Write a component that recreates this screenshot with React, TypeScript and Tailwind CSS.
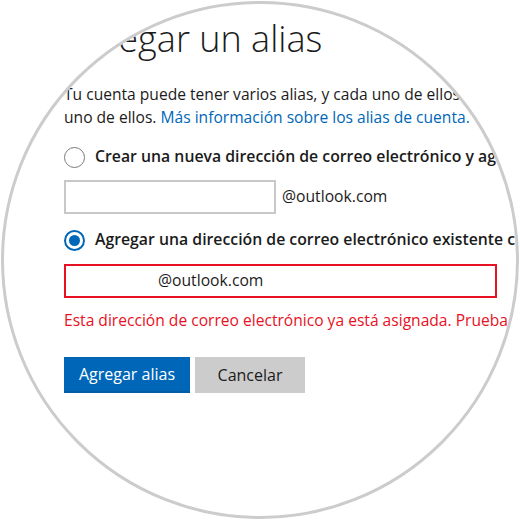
export default function App() {
  return (
    <div className="w-[520px] h-[520px] bg-white">
      <div
        className="ml-[1px] mt-[1px] w-[518px] h-[518px] rounded-full border-[3px] border-[#cccccc] overflow-hidden bg-white text-[#1b1b1b]"
        style={{ fontFamily: '"Segoe UI", "Open Sans", "Noto Sans", sans-serif' }}
      >
        <div className="pl-[60px] flex flex-col w-[600px]">
          {/* Titulo */}
          <h1 className="mt-[13px] text-[36px] leading-[44px] font-light whitespace-nowrap">
            Agregar un alias
          </h1>

          {/* Descripcion */}
          <div className="mt-[22px] text-[15.6px] leading-[23px] whitespace-nowrap">
            <p>Tu cuenta puede tener varios alias, y cada uno de ellos puede usarse para iniciar sesión con cualquiera de</p>
            <p>
              uno de ellos.{' '}
              <a href="#" className="text-[#0067b8]">Más información sobre los alias de cuenta.</a>
            </p>
          </div>

          {/* Opcion 1 */}
          <label className="mt-[16px] flex items-center gap-[10px] h-[24px] whitespace-nowrap">
            <span className="w-[21px] h-[21px] rounded-full border-[1.5px] border-[#7a7a7a] bg-white shrink-0" />
            <span className="text-[15.8px] font-semibold">Crear una nueva dirección de correo electrónico y agregarla como alias</span>
          </label>

          <div className="mt-[11px] flex items-center gap-[6px]">
            <div className="w-[212px] h-[34px] border-2 border-[#c8c8c8] bg-white" />
            <span className="text-[15.7px]">@outlook.com</span>
          </div>

          {/* Opcion 2 */}
          <label className="mt-[14px] flex items-center gap-[10px] h-[24px] whitespace-nowrap">
            <span className="w-[21px] h-[21px] rounded-full border-2 border-[#0067b8] bg-white shrink-0 flex items-center justify-center">
              <span className="w-[11px] h-[11px] rounded-full bg-[#0067b8]" />
            </span>
            <span className="text-[15.8px] font-semibold">Agregar una dirección de correo electrónico existente como alias</span>
          </label>

          <div className="mt-[12px] w-[433px] h-[34px] border-2 border-[#e81123] bg-white flex items-center pl-[92px]">
            <span className="text-[15.7px]">@outlook.com</span>
          </div>

          <p className="mt-[11px] text-[15.6px] leading-[23px] text-[#e81123] whitespace-nowrap">
            Esta dirección de correo electrónico ya está asignada. Prueba con otra.
          </p>

          {/* Botones */}
          <div className="mt-[25px] flex gap-[5px]">
            <button className="w-[126px] h-[36px] bg-[#0067b8] text-white text-[16px] border-b-2 border-[#005da6]">
              Agregar alias
            </button>
            <button className="w-[110px] h-[36px] bg-[#cccccc] text-[#1b1b1b] text-[16px]">
              Cancelar
            </button>
          </div>
        </div>
      </div>
    </div>
  )
}
